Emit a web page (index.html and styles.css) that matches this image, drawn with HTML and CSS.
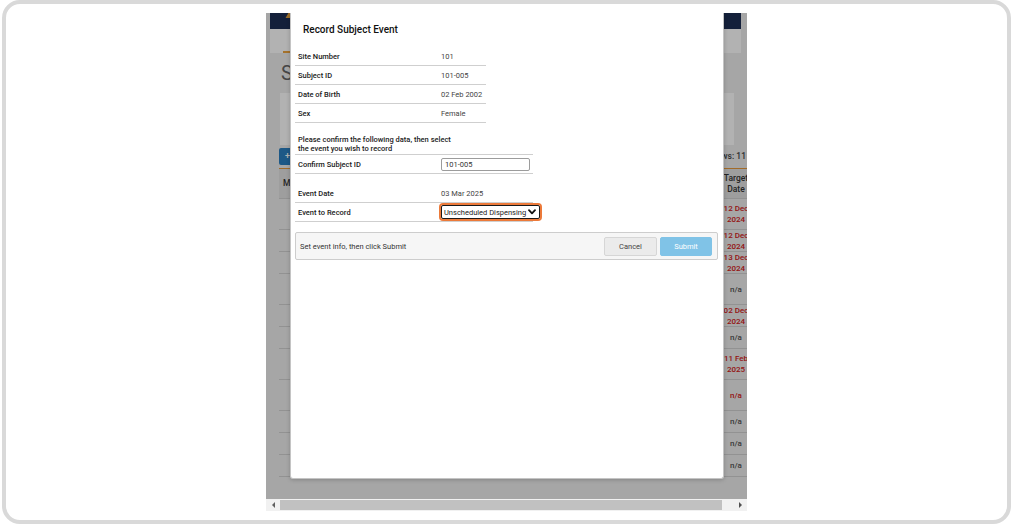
FILE: index.html
```html
<!DOCTYPE html>
<html lang="en">
<head>
  <meta charset="UTF-8" />
  <title>Record Subject Event</title>
  <meta name="viewport" content="width=device-width, initial-scale=1.0" />
  <link rel="stylesheet" href="styles.css">
</head>
<body>
  <div class="frame">
    <div class="shot">
      <div class="viewport">

        <!-- Page behind the dialog -->
        <div class="page">
          <div class="topbar"><span class="logo"></span></div>
          <div class="tabs"><span class="tab active">Subjects</span></div>
          <h1 class="page-title">Subjects</h1>
          <div class="filters"></div>
          <div class="toolbar">
            <span class="add-btn">+ Add Subject</span>
            <span class="rows-count">Rows: 11</span>
          </div>
          <div class="grid">
            <div class="grid-row grid-head"><span class="cell">MRN</span><span class="cell target">Target Date</span></div>
            <div class="grid-row tall"><span class="cell"></span><span class="cell target late">12 Dec 2024</span></div>
            <div class="grid-row"><span class="cell"></span><span class="cell target late">12 Dec 2024</span></div>
            <div class="grid-row"><span class="cell"></span><span class="cell target late">13 Dec 2024</span></div>
            <div class="grid-row tall"><span class="cell"></span><span class="cell target">n/a</span></div>
            <div class="grid-row"><span class="cell"></span><span class="cell target late">02 Dec 2024</span></div>
            <div class="grid-row"><span class="cell"></span><span class="cell target">n/a</span></div>
            <div class="grid-row tall"><span class="cell"></span><span class="cell target late">11 Feb 2025</span></div>
            <div class="grid-row tall"><span class="cell"></span><span class="cell target late">n/a</span></div>
            <div class="grid-row"><span class="cell"></span><span class="cell target">n/a</span></div>
            <div class="grid-row"><span class="cell"></span><span class="cell target">n/a</span></div>
            <div class="grid-row"><span class="cell"></span><span class="cell target">n/a</span></div>
          </div>
        </div>

        <div class="backdrop"></div>

        <!-- Dialog -->
        <div class="modal">
          <div class="modal-title">Record Subject Event</div>

          <div class="info">
            <div class="info-row"><span class="label">Site Number</span><span class="value">101</span></div>
            <div class="info-row"><span class="label">Subject ID</span><span class="value">101-005</span></div>
            <div class="info-row"><span class="label">Date of Birth</span><span class="value">02 Feb 2002</span></div>
            <div class="info-row"><span class="label">Sex</span><span class="value">Female</span></div>
          </div>

          <div class="confirm">
            <div class="confirm-note">Please confirm the following data, then select<br>the event you wish to record</div>
            <div class="info-row"><span class="label">Confirm Subject ID</span><span class="value"><input class="text-input" type="text" value="101-005"></span></div>
            <div class="spacer"></div>
            <div class="info-row"><span class="label">Event Date</span><span class="value">03 Mar 2025</span></div>
            <div class="info-row"><span class="label">Event to Record</span>
              <span class="value">
                <span class="select">Unscheduled Dispensing
                  <svg width="8" height="6" viewBox="0 0 8 6"><path d="M1 1.2 L4 4.4 L7 1.2" fill="none" stroke="#111" stroke-width="1.8" stroke-linecap="round" stroke-linejoin="round"/></svg>
                </span>
              </span>
            </div>
          </div>

          <div class="modal-footer">
            <span class="hint">Set event info, then click Submit</span>
            <div class="actions">
              <button class="btn btn-cancel">Cancel</button>
              <button class="btn btn-submit">Submit</button>
            </div>
          </div>
        </div>
      </div>

      <!-- Browser horizontal scrollbar -->
      <div class="hscroll">
        <span class="sb-btn left"></span>
        <span class="sb-thumb"></span>
        <span class="sb-btn right"></span>
      </div>
    </div>
  </div>
</body>
</html>
```

FILE: styles.css
```css
* { box-sizing: border-box; margin: 0; padding: 0; }
html, body {
  width: 100%; height: 100%; overflow: hidden;
  background: #fff; font-family: Roboto, 'Liberation Sans', sans-serif;
}

.frame {
  height: 524px; margin: 0 2px;
  border: 4px solid #d9d9d9; border-radius: 18px;
  display: flex; justify-content: center; align-items: flex-start;
  padding-top: 9px;
}
.shot { width: 481px; }
.viewport {
  position: relative; height: 486px; overflow: hidden;
  background: #eeeeee;
}

/* Страница под диалогом */
.topbar { height: 16px; margin: 0 6px 0 4px; background: #1e2f53; display: flex; }
.logo {
  width: 5px; height: 5px; margin-left: 17px;
  background: #e3a03c; transform: skewX(-30deg);
}
.tabs { height: 24px; margin: 0 6px 0 4px; background: #fff; display: flex; align-items: flex-end; }
.tab { margin-left: 13px; padding: 0 8px 4px; font-size: 9px; color: #333; border-bottom: 2px solid #eda43f; }
.page-title {
  margin: 8px 0 0 15px; height: 24px;
  font-size: 20px; line-height: 24px; font-weight: 400; color: #666;
}
.filters { margin: 8px 0 0 14px; width: 454px; height: 52px; background: #fff; }
.toolbar {
  margin: 3px 0 0 13px; width: 467px; height: 20px;
  display: flex; justify-content: space-between; align-items: flex-start;
}
.add-btn {
  height: 17px; padding: 0 8px 0 6px; background: #2a7fc0; border-radius: 2px;
  color: #fff; font-size: 9px; line-height: 17px; font-weight: 500;
}
.rows-count { font-size: 8.5px; line-height: 17px; color: #444; font-weight: 500; }

.grid { margin-left: 13px; width: 474px; border-top: 1px solid #e89a3c; }
.grid-row {
  display: flex; height: 22px;
  border-bottom: 1px solid #d2d2d2;
  font-size: 8px; line-height: 11px; font-weight: 500; color: #555;
}
.grid-row.tall { height: 31px; }
.grid-head { height: 30px; background: #e2e2e2; color: #333; font-size: 8.5px; }
.cell { flex: 1; display: flex; align-items: center; padding-left: 4px; }
.cell.target { flex: 0 0 34px; padding: 0; justify-content: center; text-align: center; }
.cell.late { color: #d42020; }

.backdrop { position: absolute; inset: 0; background: rgba(0, 0, 0, 0.3); z-index: 1; }

/* Диалог */
.modal {
  position: absolute; top: 0; left: 24px; z-index: 2;
  width: 434px; height: 466px; padding: 0 5px 0 4px;
  background: #fff; border: 1px solid #c4c4c4; border-top: none;
  border-radius: 0 0 3px 3px; box-shadow: 0 1px 4px rgba(0, 0, 0, 0.2);
  color: #1c1c1c; font-size: 7.5px;
}
.modal-title { height: 34px; padding: 10px 0 0 8px; font-size: 10px; line-height: 14px; font-weight: 500; color: #111; }

.info { width: 191px; }
.confirm { width: 238px; margin-top: 10px; }
.info-row {
  display: grid; grid-template-columns: 143px 1fr; align-items: center;
  height: 19px; border-bottom: 1px solid #cfcfcf;
}
.label { padding-left: 3px; font-weight: 500; color: #1a1a1a; }
.value { padding-left: 3px; color: #444; white-space: nowrap; display: flex; }
.confirm-note {
  padding: 2px 3px 1px; line-height: 9px; height: 22px;
  font-weight: 500; border-bottom: 1px solid #cfcfcf;
}
.spacer { height: 10px; }

.text-input {
  width: 89px; height: 13px; padding: 0 3px;
  border: 1px solid #9c9c9c; border-radius: 2px;
  font: 7.5px Roboto, 'Liberation Sans', sans-serif; color: #333;
}
.select {
  width: 99px; height: 14px; padding: 0 3px 0 2px;
  display: flex; align-items: center; justify-content: space-between;
  border: 1px solid #1a1a1a; border-radius: 2px;
  box-shadow: 0 0 0 2px #ec7a3a; color: #222;
}

.modal-footer {
  margin-top: 10px; height: 28px; padding: 0 5px 0 4px;
  display: flex; align-items: center; justify-content: space-between;
  background: #f6f6f6; border: 1px solid #cdcdcd; border-radius: 2px;
}
.hint { color: #333; }
.actions { display: flex; gap: 3px; }
.btn {
  width: 53px; height: 19px; border-radius: 2px;
  font: 7.5px Roboto, 'Liberation Sans', sans-serif;
}
.btn-cancel { background: #ebebeb; border: 1px solid #d6d6d6; color: #444; }
.btn-submit { width: 52px; background: #80c3e7; border: 1px solid #80c3e7; color: #fff; }

/* Скроллбар */
.hscroll { height: 12px; background: #f1f1f1; display: flex; align-items: center; }
.sb-btn { width: 14px; height: 12px; display: flex; align-items: center; justify-content: center; }
.sb-btn.right { margin-left: auto; }
.sb-btn.left::before, .sb-btn.right::before {
  content: ''; border-top: 3px solid transparent; border-bottom: 3px solid transparent;
}
.sb-btn.left::before { border-right: 3px solid #606060; }
.sb-btn.right::before { border-left: 3px solid #505050; }
.sb-thumb { width: 442px; height: 10px; background: #c1c1c1; }
```
